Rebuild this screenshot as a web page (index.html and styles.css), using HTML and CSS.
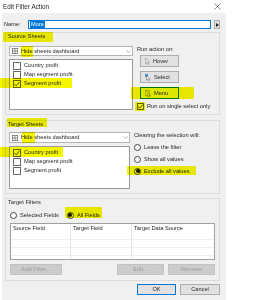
FILE: index.html
```html
<!DOCTYPE html>
<html>
<head>
<meta charset="utf-8">
<link rel="stylesheet" href="styles.css">
</head>
<body>
<div class="window">
  <div class="titlebar">
    <span>Edit Filter Action</span>
    <svg class="close" width="7" height="7" viewBox="0 0 7 7"><path d="M.5 .5L6.5 6.5M6.5 .5L.5 6.5" stroke="#555" stroke-width=".7"/></svg>
  </div>
  <div class="panel">
    <div class="name-row">
      <span class="name-label">Name:</span>
      <div class="name-input"><span class="sel">More</span></div>
      <button class="btn mini"><svg width="3" height="4" viewBox="0 0 3 4"><path d="M0 0L3 2L0 4Z" fill="#222"/></svg></button>
    </div>

    <section class="group group-source">
      <div class="glabel">Source Sheets</div>
      <div class="gcontent gc-source">
        <div class="col-left w124">
          <div class="dropdown h10">
            <svg class="grid" width="6" height="6" viewBox="0 0 6 6"><rect x=".35" y=".35" width="5.3" height="5.3" fill="none" stroke="#666" stroke-width=".7"/><path d="M3 .4V5.6M.4 3H5.6" stroke="#666" stroke-width=".7"/></svg>
            <span>Hide sheets dashboard</span>
            <svg class="chev" width="5" height="3" viewBox="0 0 5 3"><path d="M.4 .4L2.5 2.5L4.6 .4" fill="none" stroke="#888" stroke-width=".6"/></svg>
          </div>
          <div class="list h51">
            <div class="item"><span class="cb"></span>Country profit</div>
            <div class="item"><span class="cb"></span>Map segment profit</div>
            <div class="item"><span class="cb"><svg width="8" height="8" viewBox="0 0 8 8"><path d="M1.5 4L3.2 5.8L6.6 1.8" fill="none" stroke="#222" stroke-width=".8"/></svg></span>Segment profit</div>
          </div>
        </div>
        <div class="col-right">
          <div class="caption">Run action on:</div>
          <button class="btn act first">
            <svg width="5" height="7" viewBox="0 0 5 7"><path d="M.6 .4V5.6L1.9 4.5L2.8 6.6L3.6 6.2L2.7 4.2L4.4 4.1Z" fill="#fff" stroke="#666" stroke-width=".5"/></svg>
            <span>Hover</span>
          </button>
          <button class="btn act">
            <svg width="6" height="7" viewBox="0 0 6 7"><rect x="0" y="0" width="3" height="3" fill="#4a90d9"/><path d="M1.6 1.4V6.2L2.8 5.2L3.6 6.9L4.3 6.6L3.5 4.9L5 4.8Z" fill="#fff" stroke="#555" stroke-width=".5"/></svg>
            <span>Select</span>
          </button>
          <button class="btn act menu">
            <svg width="6" height="7" viewBox="0 0 6 7"><rect x=".3" y=".3" width="4" height="5" fill="#fff" stroke="#777" stroke-width=".5"/><path d="M1 1.5H3.5M1 2.7H3.5" stroke="#999" stroke-width=".4"/><path d="M2.6 2.6V6.6L3.6 5.8L4.2 7L4.8 6.7L4.2 5.5L5.5 5.4Z" fill="#fff" stroke="#555" stroke-width=".45"/></svg>
            <span>Menu</span>
          </button>
          <div class="check-row"><span class="cb small"><svg width="7" height="7" viewBox="0 0 7 7"><path d="M1.2 3.5L2.8 5.1L5.8 1.6" fill="none" stroke="#222" stroke-width=".8"/></svg></span>Run on single select only</div>
        </div>
      </div>
    </section>

    <section class="group group-target">
      <div class="glabel">Target Sheets</div>
      <div class="gcontent gc-target">
        <div class="col-left w121">
          <div class="dropdown h11">
            <svg class="grid" width="6" height="6" viewBox="0 0 6 6"><rect x=".35" y=".35" width="5.3" height="5.3" fill="none" stroke="#666" stroke-width=".7"/><path d="M3 .4V5.6M.4 3H5.6" stroke="#666" stroke-width=".7"/></svg>
            <span>Hide sheets dashboard</span>
            <svg class="chev" width="5" height="3" viewBox="0 0 5 3"><path d="M.4 .4L2.5 2.5L4.6 .4" fill="none" stroke="#888" stroke-width=".6"/></svg>
          </div>
          <div class="list h43">
            <div class="item"><span class="cb"><svg width="8" height="8" viewBox="0 0 8 8"><path d="M1.5 4L3.2 5.8L6.6 1.8" fill="none" stroke="#222" stroke-width=".8"/></svg></span>Country profit</div>
            <div class="item"><span class="cb"></span>Map segment profit</div>
            <div class="item"><span class="cb"></span>Segment profit</div>
          </div>
        </div>
        <div class="col-right">
          <div class="caption">Clearing the selection will:</div>
          <div class="radio-row"><span class="radio"></span>Leave the filter</div>
          <div class="radio-row"><span class="radio"></span>Show all values</div>
          <div class="radio-row"><span class="radio on"></span>Exclude all values</div>
        </div>
      </div>
    </section>

    <section class="group group-filters">
      <div class="glabel">Target Filters</div>
      <div class="filter-radios">
        <div class="radio-opt"><span class="radio"></span>Selected Fields</div>
        <div class="radio-opt"><span class="radio on"></span>All Fields</div>
      </div>
      <div class="table">
        <div class="th">Source Field</div>
        <div class="th">Target Field</div>
        <div class="th last">Target Data Source</div>
        <div class="td"></div><div class="td"></div><div class="td last"></div>
        <div class="td"></div><div class="td"></div><div class="td last"></div>
        <div class="td end"></div><div class="td end"></div><div class="td last end"></div>
      </div>
      <div class="table-buttons">
        <button class="btn dis w52">Add Filter...</button>
        <button class="btn dis w47 push">Edit...</button>
        <button class="btn dis w47">Remove</button>
      </div>
    </section>

    <div class="footer">
      <button class="btn ok">OK</button>
      <button class="btn cancel">Cancel</button>
    </div>
  </div>

  <div class="marks">
    <div class="mark m1"></div>
    <div class="mark m2"></div>
    <div class="mark m3"></div>
    <div class="mark m4"></div>
    <div class="mark m5"></div>
    <div class="mark m6"></div>
    <div class="mark m7"></div>
    <div class="mark m8"></div>
    <div class="mark m9"></div>
    <div class="mark m10"></div>
  </div>
</div>
</body>
</html>
```
FILE: styles.css
```css
* { box-sizing: border-box; }

body {
  margin: 0;
  background: #ffffff;
  font-family: "Liberation Sans", Arial, sans-serif;
  font-size: 5.7px;
  line-height: 7px;
  color: #262626;
}

.window {
  position: relative;
  width: 226px;
  height: 300px;
}

.titlebar {
  height: 13px;
  display: flex;
  align-items: center;
  justify-content: space-between;
  padding: 0 5px 0 3px;
  font-size: 6.4px;
  color: #2b2b2b;
}

.panel {
  margin-left: 2px;
  height: 287px;
  background: #f0f0f0;
  padding-top: 7px;
}

.btn {
  font: inherit;
  line-height: 7px;
  color: #262626;
  margin: 0;
  padding: 0;
  background: #e1e1e1;
  border: 1px solid #adadad;
  border-radius: 0;
  display: flex;
  align-items: center;
  justify-content: center;
}

/* name row */
.name-row {
  display: flex;
  align-items: center;
  height: 9px;
}
.name-label {
  width: 26px;
  padding-left: 2px;
}
.name-input {
  width: 183px;
  height: 9px;
  background: #fff;
  border: 1px solid #0078d7;
  display: flex;
  align-items: center;
  padding-left: 1px;
}
.sel {
  background: #0078d7;
  color: #fff;
  padding: 0 1px;
}
.mini {
  width: 6px;
  height: 9px;
  margin-left: 3px;
}

/* groups */
.group {
  margin-left: 3px;
  width: 215px;
  border: 1px solid #dcdcdc;
  padding: 0 3px 4px;
}
.group-source { margin-top: 3px; }
.group-target { margin-top: 5px; }
.group-filters { margin-top: 4px; padding-bottom: 5px; }

.glabel {
  height: 7px;
  margin-left: -1px;
}

.gcontent {
  display: flex;
  gap: 4px;
}
.gc-source { margin-top: 6px; }
.gc-target { margin-top: 4px; }

.col-left { display: flex; flex-direction: column; gap: 3px; }
.w124 { width: 124px; }
.w121 { width: 121px; }
.col-right { flex: 1; display: flex; flex-direction: column; }

.dropdown {
  background: #fff;
  border: 1px solid #b4b4b4;
  display: flex;
  align-items: center;
  padding: 0 1px 0 2px;
}
.h10 { height: 10px; }
.h11 { height: 11px; }
.grid { margin-right: 3px; flex: none; }
.chev { margin-left: auto; }

.list {
  background: #fff;
  border: 1px solid #9a9a9a;
  padding: 1px 3px;
}
.h51 { height: 51px; }
.h43 { height: 43px; }

.item {
  height: 9px;
  display: flex;
  align-items: center;
  gap: 3px;
}

.cb {
  width: 8px;
  height: 8px;
  background: #fff;
  border: 1px solid #6a6a6a;
  display: flex;
  align-items: center;
  justify-content: center;
  flex: none;
}
.cb svg { flex: none; }
.cb.small { width: 7px; height: 7px; }

.caption { height: 7px; }

.act {
  width: 39px;
  height: 12px;
  margin: 4px 0 0 3px;
  justify-content: flex-start;
  padding-left: 4px;
  gap: 3px;
}
.act.first { margin-top: 2px; }
.act.menu {
  border-color: #0078d7;
  background: #e5f1fb;
}

.check-row {
  margin-top: 4px;
  height: 7px;
  display: flex;
  align-items: center;
  gap: 3px;
}

.radio-row {
  margin-top: 4px;
  height: 8px;
  display: flex;
  align-items: center;
  gap: 3px;
}

.radio {
  width: 7px;
  height: 7px;
  border-radius: 50%;
  border: 1px solid #444;
  background: #fff;
  flex: none;
  display: flex;
  align-items: center;
  justify-content: center;
}
.radio.on::after {
  content: "";
  width: 4px;
  height: 4px;
  border-radius: 50%;
  background: #111;
}

/* filters */
.filter-radios {
  margin-top: 5px;
  height: 8px;
  display: flex;
  align-items: center;
  gap: 8px;
  padding-left: 1px;
}
.radio-opt {
  display: flex;
  align-items: center;
  gap: 3px;
}

.table {
  margin: 4px 0 0 1px;
  width: 205px;
  height: 37px;
  background: #fff;
  border: 1px solid #a0a0a0;
  display: grid;
  grid-template-columns: 60px 61px 1fr;
  grid-template-rows: 16px 8px 8px 1fr;
}
.th, .td {
  border-right: 1px solid #e6e6e6;
  border-bottom: 1px solid #efefef;
}
.th { padding: 1px 0 0 2px; }
.last { border-right: none; }
.end { border-bottom: none; }

.table-buttons {
  margin: 4px 0 0 1px;
  width: 205px;
  display: flex;
  gap: 4px;
}
.dis {
  height: 11px;
  background: #cccccc;
  border-color: #c2c2c2;
  color: #9a9a9a;
}
.w52 { width: 52px; }
.w47 { width: 47px; }
.push { margin-left: auto; }

.footer {
  margin-top: 3px;
  display: flex;
  justify-content: flex-end;
  gap: 4px;
  padding-right: 6px;
}
.ok {
  width: 39px;
  height: 11px;
  border-color: #0078d7;
}
.cancel {
  width: 40px;
  height: 11px;
}

/* highlighter marks drawn over the dialog */
.marks {
  position: absolute;
  inset: 0;
  pointer-events: none;
}
.mark {
  position: absolute;
  background: #f5f500;
  mix-blend-mode: multiply;
  border-radius: 1px;
}
.m1 { left: 3px; top: 32px; width: 50px; height: 10px; }
.m2 { left: 21px; top: 46px; width: 12px; height: 11px; }
.m3 { left: 0; top: 78px; width: 72px; height: 10px; }
.m4 { left: 131px; top: 87px; width: 63px; height: 12px; }
.m5 { left: 135px; top: 102px; width: 10px; height: 9px; }
.m6 { left: 7px; top: 118px; width: 40px; height: 9px; }
.m7 { left: 22px; top: 132px; width: 13px; height: 11px; }
.m8 { left: 0; top: 147px; width: 63px; height: 10px; }
.m9 { left: 127px; top: 166px; width: 69px; height: 9px; }
.m10 { left: 65px; top: 207px; width: 37px; height: 11px; }
```
